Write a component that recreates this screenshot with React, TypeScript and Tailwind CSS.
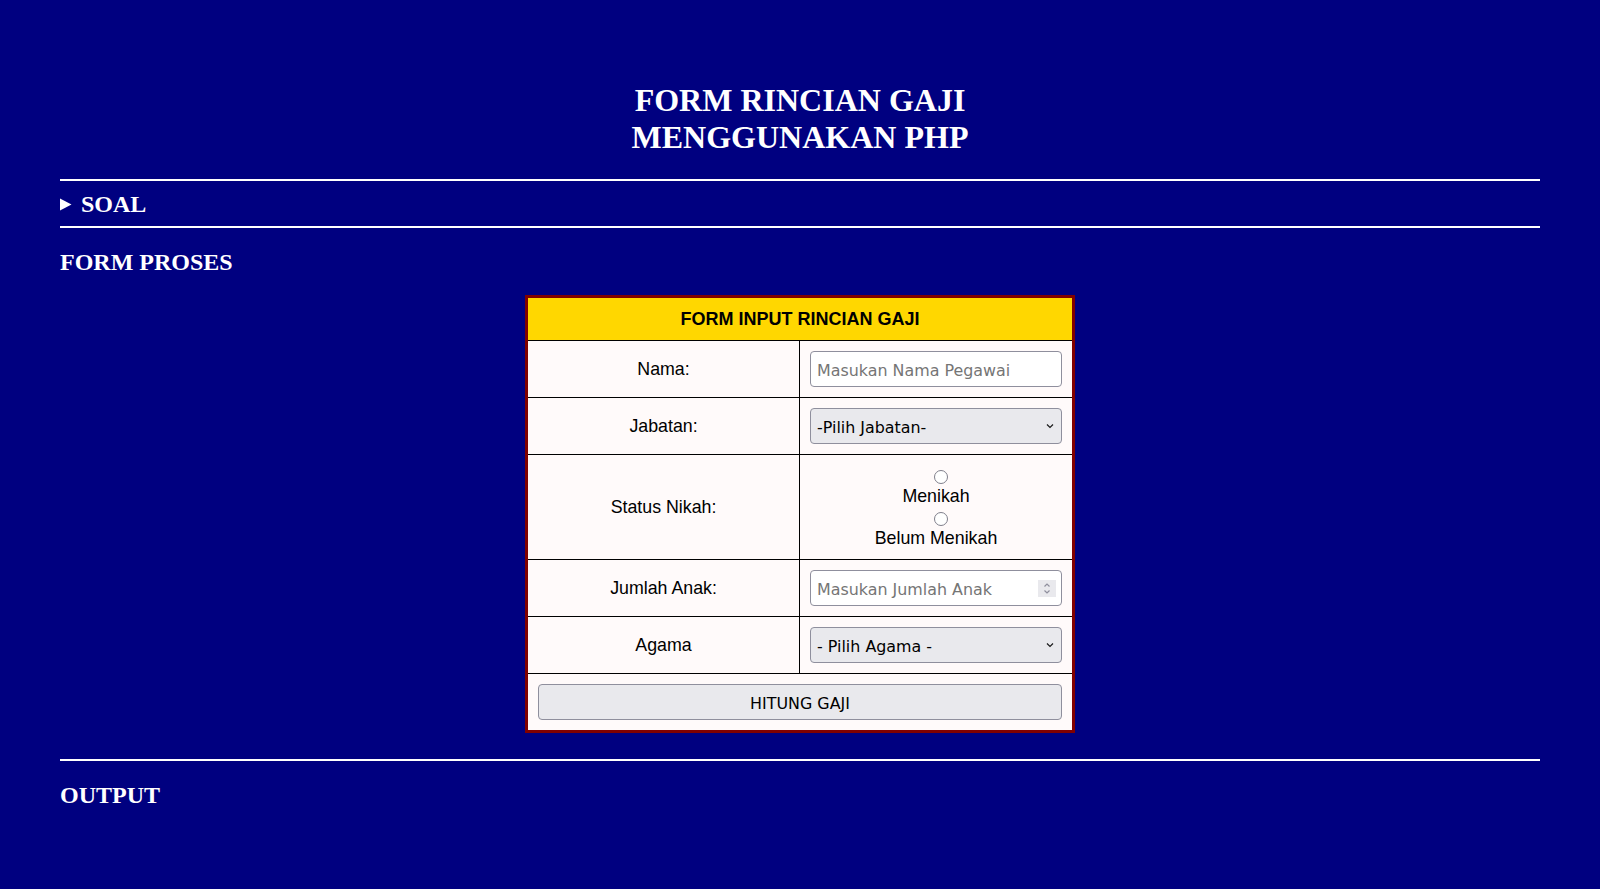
import React from "react";

function Chevron() {
  return (
    <svg width="10" height="6" viewBox="0 0 10 6" className="shrink-0">
      <path d="M2 1.5 L5 4.5 L8 1.5" fill="none" stroke="#1a1a1a" strokeWidth="1.2" />
    </svg>
  );
}

function Radio({ name }: { name: string }) {
  return (
    <div className="h-[21px] flex items-center justify-center pl-[10px] pt-[2px]">
      <span className="block w-[14px] h-[14px] rounded-full border-[1.5px] border-[#7f7f8b] bg-white" aria-label={name} />
    </div>
  );
}

function Row({ label, children, h = "h-[56px]" }: { label: string; children: React.ReactNode; h?: string }) {
  return (
    <div className={`flex border-b border-black ${h}`}>
      <div className="w-[272px] border-r border-black flex items-center justify-center text-[17.8px] text-black">
        {label}
      </div>
      <div className="flex-1 px-[10px] flex items-center">{children}</div>
    </div>
  );
}

export default function App() {
  return (
    <div className="min-h-[889px] bg-[#000080] px-[60px] pt-[82px] pb-[60px] text-white font-['Liberation_Serif',serif]">
      <h1 className="text-center font-bold text-[32px] leading-[37px]">
        FORM RINCIAN GAJI
        <br />
        MENGGUNAKAN PHP
      </h1>
      <div className="mt-[23px] h-[2px] bg-white" />
      <div className="mt-[9px] h-[28px] flex items-center gap-[9px] text-[24px] font-bold leading-[28px]">
        <svg width="12" height="13" viewBox="0 0 12 13">
          <polygon points="0,0.5 11.5,6.5 0,12.5" fill="white" />
        </svg>
        <span>SOAL</span>
      </div>
      <div className="mt-[8px] h-[2px] bg-white" />
      <h2 className="mt-[20px] text-[24px] font-bold leading-[28px]">FORM PROSES</h2>

      <div className="mt-[19px] mx-auto w-[550px] border-[3px] border-[#800000] bg-[#fffafa] font-['Liberation_Sans',sans-serif]">
        <div className="h-[43px] bg-[#ffd700] border-b border-black flex items-center justify-center text-black font-bold text-[18px]">
          FORM INPUT RINCIAN GAJI
        </div>
        <Row label="Nama:" h="h-[57px]">
          <div className="w-full h-[36px] rounded-[4px] border border-[#8f8f9d] bg-white flex items-center px-[6px] pt-[3px] font-['DejaVu_Sans',sans-serif] text-[15.9px] text-[#757575]">
            Masukan Nama Pegawai
          </div>
        </Row>
        <Row label="Jabatan:" h="h-[57px]">
          <div className="w-full h-[36px] rounded-[4px] border border-[#8f8f9d] bg-[#e9e9ed] flex items-center justify-between pl-[6px] pr-[6px] font-['DejaVu_Sans',sans-serif] text-[15.9px] text-black">
            <span className="pt-[3px]">-Pilih Jabatan-</span>
            <Chevron />
          </div>
        </Row>
        <Row label="Status Nikah:" h="h-[105px]">
          <div className="w-full flex flex-col items-center text-[17.8px] text-black">
            <Radio name="Menikah" />
            <div className="h-[21px] flex items-center">Menikah</div>
            <Radio name="Belum Menikah" />
            <div className="h-[21px] flex items-center">Belum Menikah</div>
          </div>
        </Row>
        <Row label="Jumlah Anak:" h="h-[57px]">
          <div className="w-full h-[36px] rounded-[4px] border border-[#8f8f9d] bg-white flex items-center justify-between pl-[6px] pr-[5px] font-['DejaVu_Sans',sans-serif] text-[15.9px] text-[#757575]">
            <span className="pt-[3px]">Masukan Jumlah Anak</span>
            <div className="w-[18px] h-[17px] bg-[#e9e9ed] flex items-center justify-center">
              <svg width="10" height="13" viewBox="0 0 10 13">
                <path d="M2.5 4.5 L5 2 L7.5 4.5" fill="none" stroke="#8f8f9d" strokeWidth="1.2" />
                <path d="M2.5 8.5 L5 11 L7.5 8.5" fill="none" stroke="#8f8f9d" strokeWidth="1.2" />
              </svg>
            </div>
          </div>
        </Row>
        <Row label="Agama" h="h-[57px]">
          <div className="w-full h-[36px] rounded-[4px] border border-[#8f8f9d] bg-[#e9e9ed] flex items-center justify-between pl-[6px] pr-[6px] font-['DejaVu_Sans',sans-serif] text-[15.9px] text-black">
            <span className="pt-[3px]">- Pilih Agama -</span>
            <Chevron />
          </div>
        </Row>
        <div className="h-[56px] px-[10px] pt-[10px]">
          <div className="w-full h-[36px] rounded-[4px] border border-[#8f8f9d] bg-[#e9e9ed] flex items-center justify-center pt-[3px] font-['DejaVu_Sans',sans-serif] text-[15.9px] text-black">
            HITUNG GAJI
          </div>
        </div>
      </div>

      <div className="mt-[26px] h-[2px] bg-white" />
      <h2 className="mt-[20px] text-[24px] font-bold leading-[28px]">OUTPUT</h2>
    </div>
  );
}
